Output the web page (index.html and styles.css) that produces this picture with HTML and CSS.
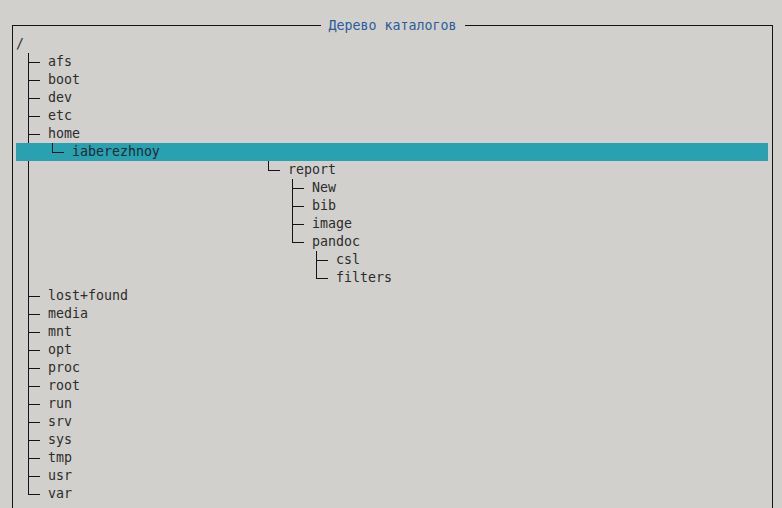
FILE: index.html
```html
<!DOCTYPE html>
<html lang="ru">
<head>
<meta charset="utf-8">
<title>Дерево каталогов</title>
<link rel="stylesheet" href="styles.css">
</head>
<body>
<div class="screen">
  <div class="frame">
    <div class="frame-top">
      <div class="edge edge-left"></div>
      <div class="title">Дерево каталогов</div>
      <div class="edge edge-right"></div>
    </div>
    <div class="tree">
      <div class="row">/</div>
      <ul class="level top">
        <li><div class="row">afs</div></li>
        <li><div class="row">boot</div></li>
        <li><div class="row">dev</div></li>
        <li><div class="row">etc</div></li>
        <li><div class="row">home</div>
          <ul class="level">
            <li><div class="row sel">iaberezhnoy</div>
              <ul class="level deep">
                <li><div class="row">report</div>
                  <ul class="level">
                    <li><div class="row">New</div></li>
                    <li><div class="row">bib</div></li>
                    <li><div class="row">image</div></li>
                    <li><div class="row">pandoc</div>
                      <ul class="level">
                        <li><div class="row">csl</div></li>
                        <li><div class="row">filters</div></li>
                      </ul>
                    </li>
                  </ul>
                </li>
              </ul>
            </li>
          </ul>
        </li>
        <li><div class="row">lost+found</div></li>
        <li><div class="row">media</div></li>
        <li><div class="row">mnt</div></li>
        <li><div class="row">opt</div></li>
        <li><div class="row">proc</div></li>
        <li><div class="row">root</div></li>
        <li><div class="row">run</div></li>
        <li><div class="row">srv</div></li>
        <li><div class="row">sys</div></li>
        <li><div class="row">tmp</div></li>
        <li><div class="row">usr</div></li>
        <li><div class="row">var</div></li>
      </ul>
    </div>
  </div>
</div>
</body>
</html>
```
FILE: styles.css
```css
html, body {
  margin: 0;
  padding: 0;
  background: #d1d0cc;
  overflow: hidden;
}

.screen {
  width: 782px;
  height: 508px;
  overflow: hidden;
  font-family: "DejaVu Sans Mono", "Liberation Mono", monospace;
  font-size: 13.28px;
  line-height: 18px;
  color: #2c2c2c;
}

.frame {
  margin: 17px 0 0 12px;
  width: 761px;
}

.frame-top {
  display: flex;
  height: 18px;
}

.edge {
  flex: 1;
  align-self: flex-end;
  height: 9px;
  border-top: 1px solid #15121b;
}

.edge-left {
  border-left: 1px solid #15121b;
}

.edge-right {
  border-right: 1px solid #15121b;
}

.title {
  width: 128px;
  padding: 0 8px;
  text-align: center;
  letter-spacing: 0;
  color: #2b5c9c;
  white-space: nowrap;
}

.tree {
  border-left: 1px solid #15121b;
  border-right: 1px solid #15121b;
  padding: 0 4px 0 3px;
  min-height: 500px;
}

.row {
  height: 18px;
  white-space: nowrap;
}

.level {
  list-style: none;
  margin: 0;
  padding: 0;
}

.level.top {
  padding-left: 8px;
}

.level.deep {
  padding-left: 192px;
}

.level li {
  position: relative;
  padding-left: 24px;
}

.level li::before {
  content: "";
  position: absolute;
  left: 4px;
  top: 0;
  bottom: 0;
  border-left: 1px solid #15121b;
}

.level li:last-child::before {
  bottom: auto;
  height: 10px;
}

.level li::after {
  content: "";
  position: absolute;
  left: 4px;
  top: 9px;
  width: 12px;
  border-top: 1px solid #15121b;
}

.row.sel {
  margin-left: -56px;
  padding-left: 56px;
  background: #29a1b1;
  color: #1e2a30;
}
```
